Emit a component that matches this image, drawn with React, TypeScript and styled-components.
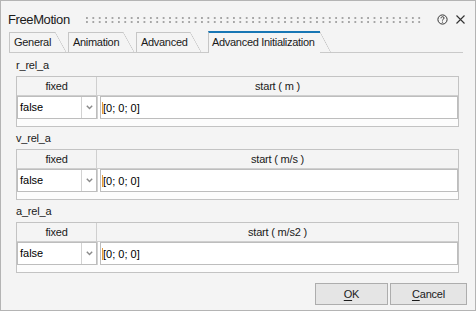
import React from 'react';
import styled, { createGlobalStyle } from 'styled-components';

const GlobalStyle = createGlobalStyle`
  html, body {
    margin: 0;
    padding: 0;
    background: #f4f4f4;
  }
  body {
    font-family: "Liberation Sans", Arial, sans-serif;
    color: #1a1a1a;
  }
`;

interface Param {
  name: string;
  unit: string;
  fixed: string;
  start: string;
}

const params: Param[] = [
  { name: 'r_rel_a', unit: 'm', fixed: 'false', start: '[0; 0; 0]' },
  { name: 'v_rel_a', unit: 'm/s', fixed: 'false', start: '[0; 0; 0]' },
  { name: 'a_rel_a', unit: 'm/s2', fixed: 'false', start: '[0; 0; 0]' },
];

const tabs = [
  { label: 'General', width: 46, gap: 2 },
  { label: 'Animation', width: 55, gap: 2 },
  { label: 'Advanced', width: 54, gap: 7 },
  { label: 'Advanced Initialization', width: 112, gap: 0, active: true },
];

const App: React.FC = () => {
  return (
    <>
      <GlobalStyle />
      <Dialog>
        <TitleBar>
          <Title>FreeMotion</Title>
          <Grip />
          <TitleIcon aria-label="help">
            <svg width="11" height="11" viewBox="0 0 11 11" fill="none">
              <circle cx="5.5" cy="5.5" r="4.6" stroke="#333" strokeWidth="1" />
              <path
                d="M4 4.3c0-1 .7-1.6 1.6-1.6.9 0 1.5.6 1.5 1.3 0 .7-.5 1-1 1.3-.4.3-.6.5-.6 1v.3"
                stroke="#333"
                strokeWidth="1"
              />
              <circle cx="5.5" cy="8.1" r="0.6" fill="#333" />
            </svg>
          </TitleIcon>
          <TitleIcon aria-label="close">
            <svg width="9" height="9" viewBox="0 0 9 9">
              <path d="M0.5 0.5L8.5 8.5M8.5 0.5L0.5 8.5" stroke="#333" strokeWidth="1.1" />
            </svg>
          </TitleIcon>
        </TitleBar>

        <TabBar>
          {tabs.map((t) => (
            <Tab key={t.label} $w={t.width} $gap={t.gap} $active={t.active}>
              {t.label}
            </Tab>
          ))}
        </TabBar>

        <Content>
          {params.map((p) => (
            <Group key={p.name}>
              <GroupLabel>{p.name}</GroupLabel>
              <Table>
                <HeaderRow>
                  <HeaderCell $first>fixed</HeaderCell>
                  <HeaderCell>start ( {p.unit} )</HeaderCell>
                </HeaderRow>
                <DataRow>
                  <Combo>
                    <ComboText>{p.fixed}</ComboText>
                    <ComboArrow>
                      <svg width="7" height="5" viewBox="0 0 7 5">
                        <path d="M0.8 0.8L3.5 3.6L6.2 0.8" stroke="#8a8a8a" strokeWidth="1.4" fill="none" />
                      </svg>
                    </ComboArrow>
                  </Combo>
                  <ValueCell>
                    <ValueBox>
                      <Caret />
                      {p.start}
                    </ValueBox>
                  </ValueCell>
                </DataRow>
                <EmptyRow />
              </Table>
            </Group>
          ))}
        </Content>

        <Footer>
          <Button $w={73}>
            <u>O</u>K
          </Button>
          <Button $w={77}>
            <u>C</u>ancel
          </Button>
        </Footer>
      </Dialog>
    </>
  );
};

const Dialog = styled.div`
  box-sizing: border-box;
  width: 476px;
  height: 311px;
  border: 1px solid #b4b4b4;
  background: #f4f4f4;
  display: flex;
  flex-direction: column;
`;

const TitleBar = styled.div`
  box-sizing: border-box;
  height: 30px;
  padding: 6px 9px 0 7px;
  display: flex;
  align-items: center;
`;

const Title = styled.span`
  font-size: 13px;
  letter-spacing: -0.4px;
  color: #1a1a1a;
`;

const Grip = styled.div`
  flex: 1;
  height: 6px;
  margin: 2px 8px 0 16px;
  background-image: linear-gradient(to right, #a6a6a6 2px, transparent 2px);
  background-size: 6.4px 100%;
  -webkit-mask-image: linear-gradient(to bottom, #000 2px, transparent 2px);
  -webkit-mask-size: 100% 4px;
  mask-image: linear-gradient(to bottom, #000 2px, transparent 2px);
  mask-size: 100% 4px;
`;

const TitleIcon = styled.div`
  width: 12px;
  height: 12px;
  display: flex;
  align-items: center;
  justify-content: center;
  margin-left: 6px;
`;

const TabBar = styled.div`
  box-sizing: border-box;
  height: 22px;
  margin: 0 12px 0 8px;
  display: flex;
  align-items: flex-end;
  border-bottom: 1px solid #c9c9c9;
`;

const Tab = styled.div<{ $w: number; $gap: number; $active?: boolean }>`
  position: relative;
  box-sizing: border-box;
  width: ${(p) => p.$w}px;
  height: ${(p) => (p.$active ? 22 : 20)}px;
  margin-right: ${(p) => p.$gap + 11}px;
  margin-bottom: ${(p) => (p.$active ? -1 : 0)}px;
  padding-left: ${(p) => (p.$active ? 3 : 4)}px;
  border-left: 1px solid #c6c6c6;
  border-top: ${(p) => (p.$active ? '2px solid #1776b4' : '1px solid #c6c6c6')};
  background: #f4f4f4;
  font-size: 11px;
  letter-spacing: -0.3px;
  line-height: ${(p) => (p.$active ? 19 : 18)}px;
  color: #1a1a1a;
  white-space: nowrap;

  &::after {
    content: '';
    position: absolute;
    left: 100%;
    top: -1px;
    width: 11px;
    height: calc(100% + 1px);
    background: linear-gradient(
      to top right,
      transparent calc(50% - 0.6px),
      #c6c6c6 50%,
      transparent calc(50% + 0.6px)
    );
  }
`;

const Content = styled.div`
  padding: 1px 16px 0 15px;
  display: flex;
  flex-direction: column;
`;

const Group = styled.div`
  display: flex;
  flex-direction: column;
`;

const GroupLabel = styled.div`
  height: 22px;
  line-height: 22px;
  font-size: 11px;
  letter-spacing: -0.2px;
  color: #1a1a1a;
`;

const Table = styled.div`
  box-sizing: border-box;
  height: 51px;
  border: 1px solid #c3c3c3;
  background: #fcfcfc;
  display: flex;
  flex-direction: column;
`;

const HeaderRow = styled.div`
  height: 18px;
  display: grid;
  grid-template-columns: 80px 1fr;
  background: #f4f4f4;
  border-bottom: 1px solid #cfcfcf;
`;

const HeaderCell = styled.div<{ $first?: boolean }>`
  border-right: ${(p) => (p.$first ? '1px solid #cfcfcf' : 'none')};
  text-align: center;
  font-size: 11px;
  letter-spacing: -0.2px;
  line-height: 18px;
  color: #1a1a1a;
`;

const DataRow = styled.div`
  height: 23px;
  display: flex;
  background: #fff;
`;

const Combo = styled.div`
  box-sizing: border-box;
  width: 80px;
  border: 1px solid #bdbdbd;
  display: flex;
  background: #fff;
`;

const ComboText = styled.div`
  flex: 1;
  padding-left: 2px;
  font-size: 11px;
  line-height: 21px;
  color: #000;
`;

const ComboArrow = styled.div`
  width: 14px;
  border-left: 1px solid #d2d2d2;
  display: flex;
  align-items: center;
  justify-content: center;
`;

const ValueCell = styled.div`
  flex: 1;
  display: flex;
  padding-left: 2px;
  border-left: 1px solid #d2d2d2;
`;

const ValueBox = styled.div`
  box-sizing: border-box;
  flex: 1;
  border: 1px solid #bdbdbd;
  display: flex;
  align-items: center;
  padding-left: 1px;
  font-size: 11px;
  color: #000;
  background: #fff;
`;

const Caret = styled.span`
  width: 1px;
  height: 12px;
  background: #e39a3c;
  margin-right: 0;
`;

const EmptyRow = styled.div`
  flex: 1;
  background: #fcfcfc;
`;

const Footer = styled.div`
  margin-top: 10px;
  padding-right: 8px;
  display: flex;
  justify-content: flex-end;
  gap: 2px;
`;

const Button = styled.div<{ $w: number }>`
  box-sizing: border-box;
  width: ${(p) => p.$w}px;
  height: 22px;
  border: 1px solid #adadad;
  background: #e5e5e5;
  display: flex;
  align-items: center;
  justify-content: center;
  font-size: 11px;
  letter-spacing: -0.2px;
  color: #1a1a1a;

  u {
    text-decoration-thickness: 1px;
    text-underline-offset: 2px;
  }
`;

export default App;
